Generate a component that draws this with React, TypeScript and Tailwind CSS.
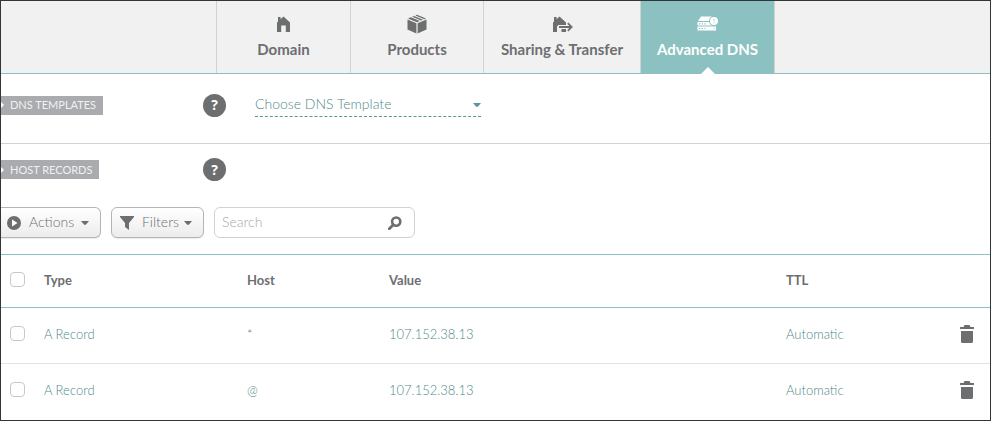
import React, { useState } from "react";

const HouseShape = "M1 6.6 2 5.6V1h2.6v2.2L7.5 0.6 14 6.6V16H9.8V9.6H5.2V16H1Z";

function HomeIcon() {
  return (
    <svg aria-hidden="true" className="h-4 w-[15px]" viewBox="0 0 15 16" fill="currentColor">
      <path d={HouseShape} />
    </svg>
  );
}

function BoxIcon() {
  return (
    <svg aria-hidden="true" className="h-5 w-5" viewBox="0 0 20 20" fill="currentColor">
      <path d="M0.5 5.6 9.4 9.3V19.6L0.5 15.6ZM19.5 5.6 10.6 9.3V19.6L19.5 15.6Z" />
      <path d="M1 4.5 3.9 3.3 12.8 7.1 10 8.3ZM5.2 2.8 7.1 2 16 5.8 14.1 6.6ZM8.4 1.5 10 0.8 19 4.5 17.3 5.2Z" />
    </svg>
  );
}

function TransferIcon() {
  return (
    <svg aria-hidden="true" className="h-4 w-[21px]" viewBox="0 0 21 16" fill="currentColor">
      <path d="M1 6.6 2 5.6V1h2.6v2.2L7.5 0.6 14 6.6V9H6V10H5V16H1ZM9.5 13H14V16H9.5Z" />
      <path d="M7 11H19M15.8 7.2 19.6 11 15.8 14.8" fill="none" stroke="#f1f1f1" strokeWidth="4" />
      <path d="M7 11H19M15.8 7.2 19.6 11 15.8 14.8" fill="none" stroke="currentColor" strokeWidth="1.8" />
    </svg>
  );
}

function ServerIcon() {
  return (
    <svg aria-hidden="true" className="h-[15px] w-[21px]" viewBox="0 0 21 15" fill="currentColor">
      <path d="M4 0.5H15L12.5 5H1ZM0.5 6H13.5L15 9H19V9.5H0.5ZM0.5 10.5H19V14.5H0.5Z" />
      <circle cx="17" cy="5" r="5" fill="#8bc1c0" />
      <circle cx="17" cy="5" r="4" />
      <path d="M17 3V5.5M17 6.5V7.5" stroke="#8bc1c0" strokeWidth="0.6" />
      <path d="M2 7.8H9M2 12.5H9M16.5 12.5H17.5" stroke="#8bc1c0" strokeWidth="1.2" strokeDasharray="1.2 1.5" />
    </svg>
  );
}

function Caret({ className = "" }: { className?: string }) {
  return (
    <svg aria-hidden="true" className={`h-1 w-2 ${className}`} viewBox="0 0 8 4" fill="currentColor">
      <path d="M0 0H8L5 3.6Q4 4.4 3 3.6Z" />
    </svg>
  );
}

const tabs = [
  { name: "Domain", icon: <HomeIcon />, width: "w-[134px]" },
  { name: "Products", icon: <BoxIcon />, width: "w-[133px]" },
  { name: "Sharing & Transfer", icon: <TransferIcon />, width: "w-[157px]" },
  { name: "Advanced DNS", icon: <ServerIcon />, width: "w-[134px]" },
];

function Tag({ children }: { children: React.ReactNode }) {
  return (
    <h2 className="flex h-[19px] items-center bg-[#a9abae] pr-[7px] text-[11px] leading-4 text-[#f1f1f1]">
      <svg aria-hidden="true" className="mr-1.5 h-1.5 w-[3px]" viewBox="0 0 3 6" fill="white">
        <path d="M0 0 3 3 0 6Z" />
      </svg>
      {children}
    </h2>
  );
}

function Help({ label }: { label: string }) {
  return (
    <button
      type="button"
      aria-label={label}
      className="flex size-[23px] items-center justify-center rounded-full bg-[#6d6e70] font-['Open_Sans',sans-serif] text-sm leading-none font-bold text-white"
    >
      ?
    </button>
  );
}

const toolButton =
  "flex h-[31px] items-center border border-[#b5b5b5] bg-gradient-to-b from-white to-[#ececec] text-sm font-light text-[#6d6e70] shadow-[0_1px_1px_rgba(0,0,0,0.08)]";

const checkbox = "block size-[15px] appearance-none rounded-sm border border-[#c8c8c8] bg-white checked:bg-[#8bc1c0]";

const records = [
  { id: "wildcard", type: "A Record", host: "*", value: "107.152.38.13", ttl: "Automatic" },
  { id: "root", type: "A Record", host: "@", value: "107.152.38.13", ttl: "Automatic" },
];

export default function App() {
  const [active, setActive] = useState("Advanced DNS");
  return (
    <div className="min-h-screen border border-[#333639] bg-white font-['Lato','Noto_Sans',sans-serif] text-[#6d6e70]">
      <nav className="flex justify-center border-b border-[#8bc1c0] bg-[#f1f1f1]">
        <div className="flex border-l border-[#d2d2d2]">
          {tabs.map((tab) => (
            <button
              key={tab.name}
              type="button"
              onClick={() => setActive(tab.name)}
              className={`relative flex h-[72px] flex-col items-center border-r border-[#d2d2d2] pt-[11px] text-[15px] leading-5 font-bold whitespace-nowrap ${tab.width} ${
                active === tab.name ? "bg-[#8bc1c0] text-white" : ""
              }`}
            >
              <span className="flex h-[23px] items-center">{tab.icon}</span>
              <span className="mt-1">{tab.name}</span>
              {active === tab.name && (
                <svg aria-hidden="true" className="absolute -bottom-px left-1/2 h-[7px] w-3.5 -translate-x-1/2" viewBox="0 0 14 7" fill="white">
                  <path d="M0 7 7 0 14 7Z" />
                </svg>
              )}
            </button>
          ))}
        </div>
      </nav>

      <section className="flex items-center border-b border-[#d2d2d2] pt-[19px] pb-[26px]">
        <div className="flex w-[202px]">
          <Tag>DNS TEMPLATES</Tag>
        </div>
        <Help label="About DNS templates" />
        <div className="relative ml-[29px] w-[226px]">
          <select
            aria-label="DNS template"
            className="block h-6 w-full appearance-none border-b border-dashed border-[#5f9593] bg-transparent pb-0.5 text-sm leading-5 font-light text-[#4f8a8a]"
          >
            <option>Choose DNS Template</option>
          </select>
          <Caret className="pointer-events-none absolute top-2.5 right-0 text-[#5f9593]" />
        </div>
      </section>

      <section className="border-b border-[#8bc1c0] pt-3.5 pb-4">
        <div className="flex items-center">
          <div className="flex w-[202px]">
            <Tag>HOST RECORDS</Tag>
          </div>
          <Help label="About host records" />
        </div>
        <div className="mt-[26px] flex gap-2.5">
          <button type="button" className={`${toolButton} w-[100px] rounded-r-md border-l-0 pl-1.5`}>
            <svg aria-hidden="true" className="mr-2 size-3.5" viewBox="0 0 14 14">
              <circle cx="7" cy="7" r="7" fill="currentColor" />
              <path d="M5 3.5 10.5 7 5 10.5Z" fill="white" />
            </svg>
            <span className="pb-0.5">Actions</span>
            <Caret className="mr-[11px] ml-auto" />
          </button>
          <button type="button" className={`${toolButton} w-[93px] rounded-md pl-2`}>
            <svg aria-hidden="true" className="mr-2 h-3.5 w-3.5" viewBox="0 0 14 14" fill="currentColor">
              <path d="M0 0H14V1L9 7V14L5 11V7L0 1Z" />
            </svg>
            <span className="pb-0.5">Filters</span>
            <Caret className="mr-[11px] ml-auto" />
          </button>
          <div className="flex h-[31px] w-[201px] items-center rounded-md border border-[#d2d2d2] px-[7px]">
            <input
              type="text"
              aria-label="Search records"
              placeholder="Search"
              className="min-w-0 flex-1 pb-0.5 text-sm font-light outline-none placeholder:text-[#a8a8a8]"
            />
            <button type="button" aria-label="Search" className="mr-[5px]">
              <svg aria-hidden="true" className="size-3.5" viewBox="0 0 14 14" fill="none" stroke="currentColor">
                <circle cx="8.2" cy="5.6" r="4.1" strokeWidth="2.6" />
                <path d="M5 9 1.3 12.7" strokeWidth="2.8" strokeLinecap="round" />
              </svg>
            </button>
          </div>
        </div>
      </section>

      <table className="w-full table-fixed border-collapse text-left">
        <colgroup>
          <col className="w-[43px]" />
          <col className="w-[203px]" />
          <col className="w-[142px]" />
          <col />
          <col className="w-[174px]" />
          <col className="w-[30px]" />
        </colgroup>
        <thead>
          <tr className="h-[52px] border-b border-[#8bc1c0] text-[13px] leading-5 *:pb-0.5">
            <th className="pl-[9px]">
              <input type="checkbox" aria-label="Select all records" className={checkbox} />
            </th>
            <th>Type</th>
            <th>Host</th>
            <th>Value</th>
            <th>TTL</th>
            <th></th>
          </tr>
        </thead>
        <tbody>
          {records.map((record) => (
            <tr
              key={record.id}
              className="h-14 border-b border-[#e3e3e3] text-[13px] leading-5 font-light text-[#4f8a8a] *:pb-[3px] last:border-b-0"
            >
              <td className="pl-[9px]">
                <input type="checkbox" aria-label={`Select ${record.type} ${record.host}`} className={checkbox} />
              </td>
              <td>{record.type}</td>
              <td>{record.host}</td>
              <td>{record.value}</td>
              <td>{record.ttl}</td>
              <td>
                <button type="button" aria-label={`Delete ${record.type} ${record.host}`} className="block text-[#6d6e70]">
                  <svg aria-hidden="true" className="h-[18px] w-3.5" viewBox="0 0 14 18" fill="currentColor">
                    <path d="M0 4V2H3.5L4.5 0H9.5L10.5 2H14V4ZM1 6H13V16.5Q13 18 11.5 18H2.5Q1 18 1 16.5Z" />
                  </svg>
                </button>
              </td>
            </tr>
          ))}
        </tbody>
      </table>
    </div>
  );
}
